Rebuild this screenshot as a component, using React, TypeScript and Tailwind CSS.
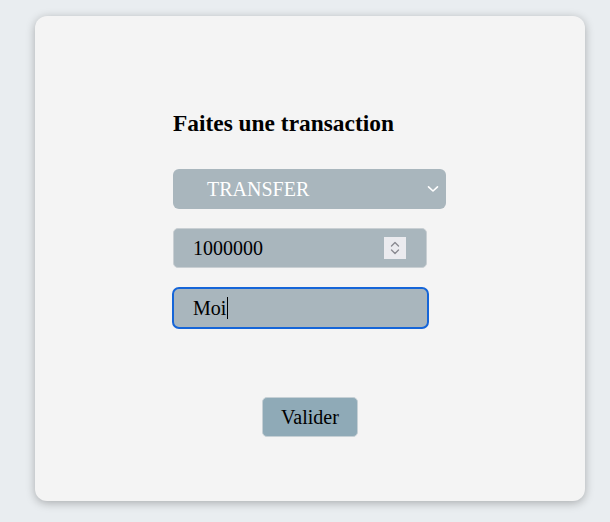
import React from "react";

export default function App() {
  return (
    <div className="min-h-[522px] w-[610px] bg-[#e9edf0] pt-[16px] pl-[35px] font-['Liberation_Serif',serif]">
      <div className="flex h-[485px] w-[550px] flex-col items-center rounded-[12px] bg-[#f4f4f4] pt-[94px] shadow-[0_2px_10px_rgba(0,0,0,0.28)]">
        <div className="flex w-[274px] flex-col">
          <h3 className="text-[23.4px] font-bold leading-[27px] text-black">Faites une transaction</h3>

          <div className="mt-[32px] flex h-[40px] w-[273px] items-center justify-between rounded-[6px] bg-[#a9b6bd] pl-[34px] pr-[7px] text-[20px] text-white">
            <span>TRANSFER</span>
            <svg width="12" height="8" viewBox="0 0 12 8" fill="none">
              <path d="M1.5 1.8 L6 6 L10.5 1.8" stroke="white" strokeWidth="1.6" strokeLinecap="round" strokeLinejoin="round" />
            </svg>
          </div>

          <div className="relative mt-[19px] flex h-[40px] w-[254px] items-center rounded-[5px] border border-[#c9cfd3] bg-[#a9b6bd] pl-[19px] text-[20px] text-black">
            <span>1000000</span>
            <div className="absolute right-[20px] top-[8px] flex h-[22px] w-[22px] flex-col items-center justify-center gap-[2px] bg-[#ebebef]">
              <svg width="10" height="6" viewBox="0 0 10 6" fill="none">
                <path d="M1.5 5 L5 1.5 L8.5 5" stroke="#8a8a92" strokeWidth="1.4" strokeLinecap="round" strokeLinejoin="round" />
              </svg>
              <svg width="10" height="6" viewBox="0 0 10 6" fill="none">
                <path d="M1.5 1 L5 4.5 L8.5 1" stroke="#8a8a92" strokeWidth="1.4" strokeLinecap="round" strokeLinejoin="round" />
              </svg>
            </div>
          </div>

          <div className="mt-[19px] -ml-[1px] flex h-[42px] w-[257px] items-center rounded-[7px] border-2 border-[#1565d8] bg-[#a9b6bd] pl-[19px] text-[20px] text-black">
            <span>Moi</span>
            <span className="ml-[1px] h-[22px] w-[1px] bg-black" />
          </div>

          <div className="mt-[68px] flex justify-center">
            <div className="flex h-[40px] w-[96px] items-center justify-center rounded-[5px] border border-[#c6d0d5] bg-[#8faab7] text-[20px] text-black">
              Valider
            </div>
          </div>
        </div>
      </div>
    </div>
  );
}
